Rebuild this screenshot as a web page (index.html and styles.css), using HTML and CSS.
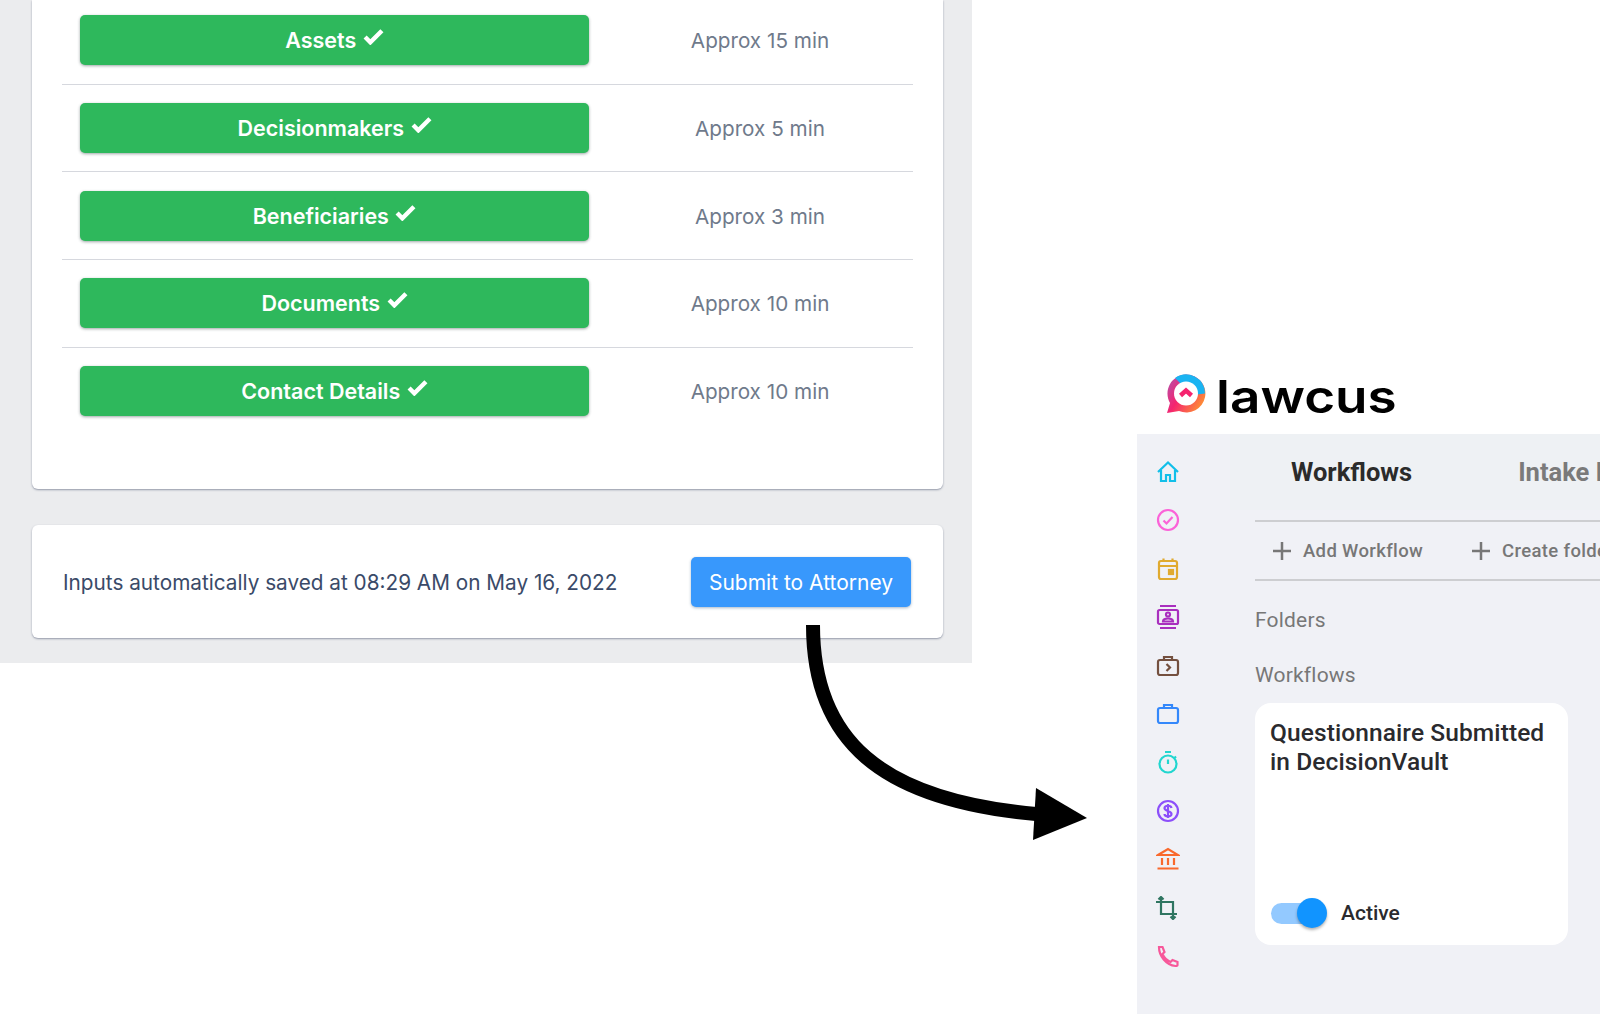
FILE: index.html
```html
<!DOCTYPE html>
<html lang="en">
<head>
    <meta charset="UTF-8">
    <meta name="viewport" content="width=device-width, initial-scale=1.0">
    <title>DecisionVault to Lawcus</title>
    <link rel="stylesheet" href="styles.css">
</head>
<body>
    <div class="page">
        <section class="vault">
            <div class="card steps">
                <div class="step">
                    <button class="step-btn" type="button">Assets <svg class="tick" viewBox="0 0 20 16"><path d="M2 8.500l5 5L18 2.500"/></svg></button>
                    <span class="step-time">Approx 15 min</span>
                </div>
                <div class="step">
                    <button class="step-btn" type="button">Decisionmakers <svg class="tick" viewBox="0 0 20 16"><path d="M2 8.500l5 5L18 2.500"/></svg></button>
                    <span class="step-time">Approx 5 min</span>
                </div>
                <div class="step">
                    <button class="step-btn" type="button">Beneficiaries <svg class="tick" viewBox="0 0 20 16"><path d="M2 8.500l5 5L18 2.500"/></svg></button>
                    <span class="step-time">Approx 3 min</span>
                </div>
                <div class="step">
                    <button class="step-btn" type="button">Documents <svg class="tick" viewBox="0 0 20 16"><path d="M2 8.500l5 5L18 2.500"/></svg></button>
                    <span class="step-time">Approx 10 min</span>
                </div>
                <div class="step">
                    <button class="step-btn" type="button">Contact Details <svg class="tick" viewBox="0 0 20 16"><path d="M2 8.500l5 5L18 2.500"/></svg></button>
                    <span class="step-time">Approx 10 min</span>
                </div>
            </div>
            <div class="card savebar">
                <span class="saved">Inputs automatically saved at 08:29 AM on May 16, 2022</span>
                <button class="submit" type="button">Submit to Attorney</button>
            </div>
        </section>

        <section class="crm">
            <div class="brand">
                <svg class="brand-mark" viewBox="0 0 40 40">
                    <defs>
                        <linearGradient id="ringWarm" x1="0" y1="0.2" x2="1" y2="0.8">
                            <stop offset="0" stop-color="#b94fa8"/>
                            <stop offset="0.4" stop-color="#f5246f"/>
                            <stop offset="1" stop-color="#ff9a2e"/>
                        </linearGradient>
                    </defs>
                    <path fill="url(#ringWarm)" d="M20 .500A19 19 0 1 1 13 37L1 39L4 29A19 19 0 0 1 20 .500z"/>
                    <path class="ring-blue" d="M9 4A19 19 0 0 1 39 19.500L27 21L17 12z"/>
                    <circle cx="20" cy="19.500" r="12" fill="#fff"/>
                    <path class="chevron" d="M14.500 21.500L20 16.500L25.500 21.500"/>
                </svg>
                <span class="brand-name">lawcus</span>
            </div>
            <div class="panel">
                <nav class="rail">
                    <svg class="rail-icon" viewBox="0 0 24 24" stroke="#12bfe9"><path d="M2 12L12 2.500L22 12M5 10v11h5v-6h4v6h5V10"/></svg>
                    <svg class="rail-icon" viewBox="0 0 24 24" stroke="#fb62d8"><circle cx="12" cy="12" r="10"/><path d="M7.500 12.500l3 3 6-6.500"/></svg>
                    <svg class="rail-icon" viewBox="0 0 24 24" stroke="#e0aa2f"><rect x="3" y="4" width="18" height="18" rx="2"/><path d="M3 9h18M7.500 1.500V5M16.500 1.500V5"/><rect x="13" y="13" width="4" height="4" fill="#e0aa2f"/></svg>
                    <svg class="rail-icon" viewBox="0 0 24 24" stroke="#a92fbe"><rect x="2" y="5" width="20" height="14" rx="1.500"/><path d="M4 1h16M4 23h16M7 16.500c0-4 10-4 10 0z"/><circle cx="12" cy="9.500" r="2"/></svg>
                    <svg class="rail-icon" viewBox="0 0 24 24" stroke="#74503f"><rect x="2" y="6" width="20" height="15" rx="2"/><path d="M8 6V3h8v3M10.500 10l3.500 3.500-3.500 3.500"/></svg>
                    <svg class="rail-icon" viewBox="0 0 24 24" stroke="#3488fb"><rect x="2" y="6" width="20" height="15" rx="2"/><path d="M8 6V3h8v3"/></svg>
                    <svg class="rail-icon" viewBox="0 0 24 24" stroke="#22d6cf"><circle cx="12" cy="14" r="8.500"/><path d="M9 2h6M12 9.500V14M18.500 6.500l1.500 1.500"/></svg>
                    <svg class="rail-icon" viewBox="0 0 24 24" stroke="#8c4ffa"><circle cx="12" cy="12" r="10"/><path d="M15.500 9c-.5-3-7-3-7 .2S15.500 11.500 15.500 15s-7 3-7 0M12 5v14"/></svg>
                    <svg class="rail-icon" viewBox="0 0 24 24" stroke="#f9692d"><path d="M2 8L12 2l10 6zM1.500 21.500h21M6 11v7M12 11v7M18 11v7"/></svg>
                    <svg class="rail-icon" viewBox="0 0 24 24" stroke="#2f7561"><path d="M5 1v17h16M0 6h17v17M2.500 3.500L5 1l2.500 2.500M14.500 20.500L17 23l2.500-2.500"/></svg>
                    <svg class="rail-icon" viewBox="0 0 24 24" stroke="#f7589a"><path d="M3 3h3.500l2 5-2 2c1.500 3.500 4.500 6.500 8 8l2-2 5 2V21c0 .6-1 1-2 1C10 21 3 12 3 3z"/></svg>
                </nav>
                <div class="content">
                    <div class="tabs">
                        <span class="tab tab-active">Workflows</span>
                        <span class="tab">Intake Forms</span>
                    </div>
                    <div class="actions">
                        <span class="action"><svg class="plus" viewBox="0 0 18 18"><path d="M9 0v18M0 9h18"/></svg>Add Workflow</span>
                        <span class="action"><svg class="plus" viewBox="0 0 18 18"><path d="M9 0v18M0 9h18"/></svg>Create folder</span>
                    </div>
                    <div class="section-label">Folders</div>
                    <div class="section-label section-label-second">Workflows</div>
                    <div class="flow-card">
                        <div class="flow-title">Questionnaire Submitted in DecisionVault</div>
                        <div class="flow-status">
                            <span class="switch"><span class="switch-knob"></span></span>
                            <span>Active</span>
                        </div>
                    </div>
                </div>
            </div>
        </section>

        <svg class="arrow" viewBox="0 0 1600 1014">
            <path class="arrow-line" d="M813 625C813 740 880 800 1036 814"/>
            <path d="M1036 788L1087 818L1033 840z"/>
        </svg>
    </div>
</body>
</html>
```

FILE: styles.css
```css
html, body {
    margin: 0;
    padding: 0;
    background: #fff;
}
.page {
    position: relative;
    display: flex;
    width: 1600px;
    height: 1014px;
    overflow: hidden;
}
button {
    border: none;
    font-family: Inter, sans-serif;
}

/* left: questionnaire */
.vault {
    box-sizing: border-box;
    width: 972px;
    height: 663px;
    padding: 0 29px 0 32px;
    background-color: #ebecee;
}
.card {
    background: #fff;
    border-radius: 0 0 6px 6px;
    box-shadow: 0 1px 2px rgba(60, 70, 100, 0.5);
}
.steps {
    height: 489px;
    padding: 0 30px;
    box-sizing: border-box;
}
.step {
    display: flex;
    align-items: flex-start;
    box-sizing: border-box;
    height: 87.750px;
    padding-top: 18.250px;
    border-bottom: 1px solid #d6d8de;
}
.step:first-child {
    height: 84.500px;
    padding-top: 15px;
}
.step:last-child {
    border-bottom: none;
}
.step-btn {
    width: 509px;
    height: 50px;
    margin-left: 18px;
    background-color: #2eb85c;
    color: #fff;
    border-radius: 5px;
    font-size: 21.500px;
    font-weight: 600;
    box-shadow: 0 1px 3px rgba(40, 60, 60, 0.45);
}
.tick {
    width: 21px;
    height: 17px;
    margin-left: 1px;
    vertical-align: 3px;
    fill: none;
    stroke: #fff;
    stroke-width: 4.200;
}
.step-time {
    flex: 1;
    padding: 13px 0 0 18px;
    text-align: center;
    color: #6f7a8b;
    font-family: Inter, sans-serif;
    font-size: 20.700px;
}
.savebar {
    display: flex;
    align-items: center;
    justify-content: space-between;
    height: 113px;
    margin-top: 36px;
    padding: 0 32px 0 31px;
    border-radius: 6px;
}
.saved {
    padding-top: 2px;
    color: #3a4a68;
    font-family: Inter, sans-serif;
    font-size: 20.750px;
}
.submit {
    width: 220px;
    height: 50px;
    padding-top: 3px;
    background-color: #3898fc;
    color: #fff;
    border-radius: 5px;
    font-size: 21px;
    box-shadow: 0 1px 3px rgba(40, 80, 120, 0.4);
}

/* right: lawcus */
.crm {
    display: flex;
    flex-direction: column;
    width: 463px;
    margin-left: 165px;
}
.brand {
    display: flex;
    align-items: flex-end;
    height: 414px;
    margin-bottom: 20px;
    padding-left: 29px;
}
.brand-mark {
    width: 40px;
    height: 40px;
}
.ring-blue {
    fill: #1ab4f2;
}
.chevron {
    fill: none;
    stroke: #f5246f;
    stroke-width: 4.500;
}
.brand-name {
    display: inline-block;
    margin: 0 0 -2px 10px;
    color: #000;
    font-family: Inter, sans-serif;
    font-size: 45px;
    font-weight: 600;
    line-height: 38px;
    transform: scaleX(1.18);
    transform-origin: left bottom;
}
.panel {
    display: flex;
    flex: 1;
    background-color: #f0f1f6;
}
.rail {
    display: flex;
    flex-direction: column;
    gap: 24.400px;
    width: 118px;
    padding: 26px 0 0 19px;
    box-sizing: border-box;
}
.rail-icon {
    width: 24px;
    height: 24px;
    fill: none;
    stroke-width: 2.200;
}
.content {
    flex: 1;
    min-width: 0;
    font-family: Roboto, sans-serif;
}
.tabs {
    display: flex;
    box-sizing: border-box;
    height: 76px;
    margin-left: -25px;
    padding-left: 61px;
    gap: 106px;
    background-color: #eef1f4;
    white-space: nowrap;
    overflow: hidden;
}
.tab {
    padding-top: 23px;
    color: #7a7a7a;
    font-size: 25.500px;
    font-weight: 700;
}
.tab-active {
    color: #2b2b2b;
}
.actions {
    display: flex;
    height: 57px;
    margin-top: 10px;
    align-items: center;
    gap: 49px;
    padding-left: 18px;
    border-top: 2px solid #cdced1;
    border-bottom: 2px solid #cdced1;
    white-space: nowrap;
    overflow: hidden;
    color: #777;
    font-size: 18.500px;
    font-weight: 500;
    letter-spacing: 0.35px;
}
.action {
    display: flex;
    align-items: center;
}
.plus {
    width: 18px;
    height: 18px;
    margin-right: 12px;
    fill: none;
    stroke: #777;
    stroke-width: 2.500;
}
.section-label {
    margin-top: 27px;
    color: #777;
    font-size: 21px;
    line-height: 24px;
    letter-spacing: 0.2px;
}
.section-label-second {
    margin-top: 31px;
}
.flow-card {
    display: flex;
    flex-direction: column;
    justify-content: space-between;
    box-sizing: border-box;
    width: 313px;
    height: 242px;
    margin-top: 16px;
    padding: 16px 15px 20px;
    background: #fff;
    border-radius: 16px;
}
.flow-title {
    color: #2a2a2e;
    font-size: 24.500px;
    font-weight: 500;
    line-height: 28.500px;
    letter-spacing: 0.1px;
}
.flow-status {
    display: flex;
    align-items: center;
    gap: 23px;
    color: #2a2a2e;
    font-size: 21px;
    font-weight: 500;
}
.switch {
    position: relative;
    width: 47px;
    height: 21px;
    margin-left: 1px;
    background-color: #93c9ff;
    border-radius: 11px;
}
.switch-knob {
    position: absolute;
    top: -5px;
    right: -9px;
    width: 30px;
    height: 30px;
    background-color: #1194ff;
    border-radius: 50%;
    box-shadow: 0 2px 3px rgba(0, 0, 0, 0.3);
}
.arrow {
    position: absolute;
    left: 0;
    top: 0;
    width: 1600px;
    height: 1014px;
    pointer-events: none;
}
.arrow-line {
    fill: none;
    stroke: #000;
    stroke-width: 14;
}
```
